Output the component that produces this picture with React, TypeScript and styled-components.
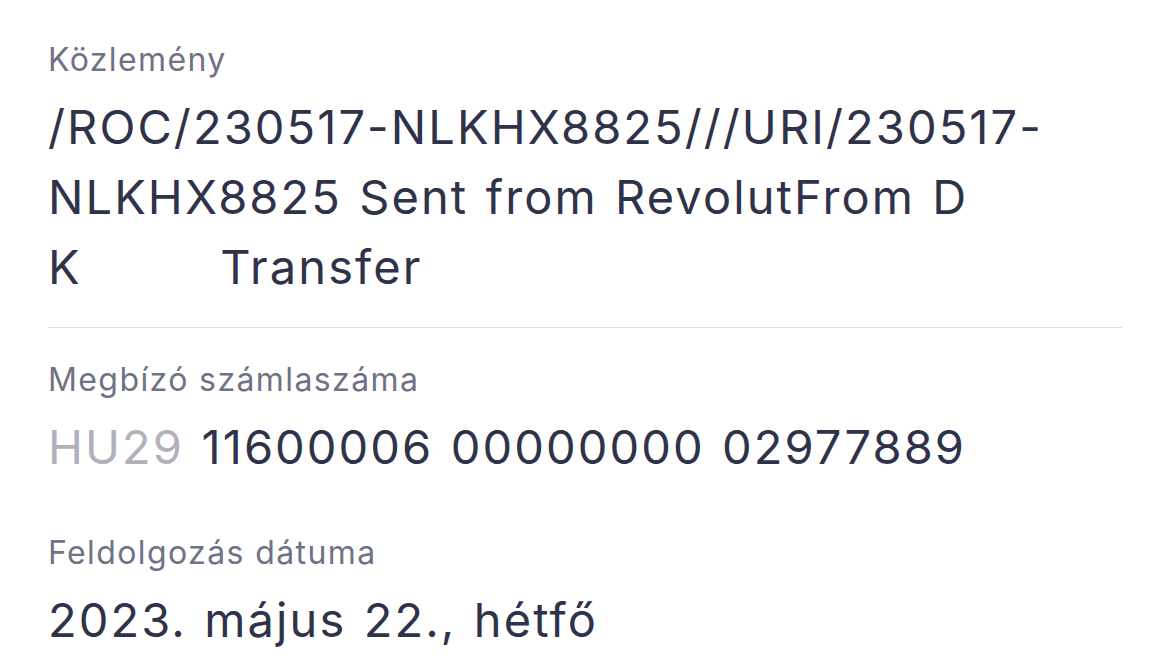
import React from 'react';
import styled, { createGlobalStyle } from 'styled-components';

const GlobalStyle = createGlobalStyle`
  html, body {
    margin: 0;
    padding: 0;
    background: #ffffff;
  }
  body {
    font-family: Inter, "Noto Sans", "Liberation Sans", sans-serif;
    -webkit-font-smoothing: antialiased;
  }
`;

const Page = styled.div`
  width: 1170px;
  height: 663px;
  overflow: hidden;
  box-sizing: border-box;
  padding: 38px 48px 0 48px;
  display: flex;
  flex-direction: column;
`;

const Field = styled.section<{ $divider?: boolean }>`
  display: flex;
  flex-direction: column;
  gap: 10px;
  padding-bottom: ${(p) => (p.$divider ? '25px' : '20px')};
  margin-bottom: ${(p) => (p.$divider ? '30px' : '29px')};
  border-bottom: ${(p) => (p.$divider ? '1.5px solid #dcdcdf' : 'none')};
`;

const Label = styled.div`
  font-size: 32px;
  line-height: 44px;
  color: #6f7285;
  letter-spacing: 1.4px;
`;

const Value = styled.div`
  font-size: 47px;
  line-height: 70px;
  color: #2f3349;
  white-space: pre;
  letter-spacing: 2.1px;
  word-spacing: 2px;
`;

const Prefix = styled.span`
  color: #b1b2b9;
`;

const App = () => {
  return (
    <>
      <GlobalStyle />
      <Page>
        <Field $divider>
          <Label>Közlemény</Label>
          <Value>
            {'/ROC/230517-NLKHX8825///URI/230517-'}
            <br />
            {'NLKHX8825 Sent from RevolutFrom D'}
            <br />
            {'K        Transfer'}
          </Value>
        </Field>
        <Field>
          <Label>Megbízó számlaszáma</Label>
          <Value>
            <Prefix>HU29</Prefix> 11600006 00000000 02977889
          </Value>
        </Field>
        <Field>
          <Label>Feldolgozás dátuma</Label>
          <Value>2023. május 22., hétfő</Value>
        </Field>
      </Page>
    </>
  );
};

export default App;
